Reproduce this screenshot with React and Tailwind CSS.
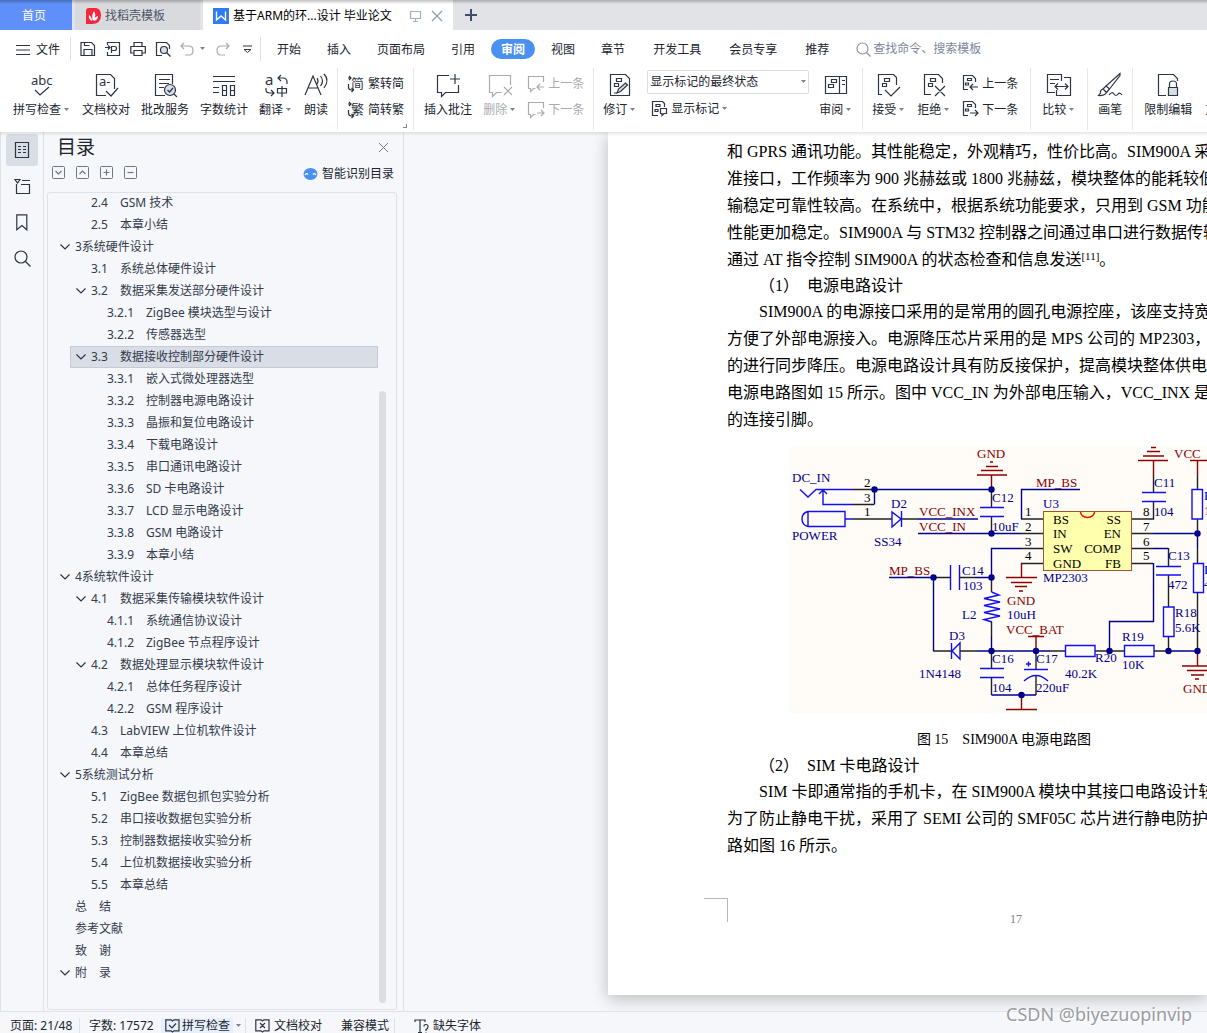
import React from 'react';

const INK = '#2d3443';
const NAVY = '#00008c';
const BLUE = '#1010ee';
const MAROON = '#8c0000';

const menus = ['开始', '插入', '页面布局', '引用', '审阅', '视图', '章节'];
const moreMenus = ['开发工具', '会员专享', '推荐'];

const toc = [
  { level: 2, num: '2.4', title: 'GSM 技术' },
  { level: 2, num: '2.5', title: '本章小结' },
  { level: 1, title: '3系统硬件设计', open: true },
  { level: 2, num: '3.1', title: '系统总体硬件设计' },
  { level: 2, num: '3.2', title: '数据采集发送部分硬件设计', open: true },
  { level: 3, num: '3.2.1', title: 'ZigBee 模块选型与设计' },
  { level: 3, num: '3.2.2', title: '传感器选型' },
  { level: 2, num: '3.3', title: '数据接收控制部分硬件设计', open: true, active: true },
  { level: 3, num: '3.3.1', title: '嵌入式微处理器选型' },
  { level: 3, num: '3.3.2', title: '控制器电源电路设计' },
  { level: 3, num: '3.3.3', title: '晶振和复位电路设计' },
  { level: 3, num: '3.3.4', title: '下载电路设计' },
  { level: 3, num: '3.3.5', title: '串口通讯电路设计' },
  { level: 3, num: '3.3.6', title: 'SD 卡电路设计' },
  { level: 3, num: '3.3.7', title: 'LCD 显示电路设计' },
  { level: 3, num: '3.3.8', title: 'GSM 电路设计' },
  { level: 3, num: '3.3.9', title: '本章小结' },
  { level: 1, title: '4系统软件设计', open: true },
  { level: 2, num: '4.1', title: '数据采集传输模块软件设计', open: true },
  { level: 3, num: '4.1.1', title: '系统通信协议设计' },
  { level: 3, num: '4.1.2', title: 'ZigBee 节点程序设计' },
  { level: 2, num: '4.2', title: '数据处理显示模块软件设计', open: true },
  { level: 3, num: '4.2.1', title: '总体任务程序设计' },
  { level: 3, num: '4.2.2', title: 'GSM 程序设计' },
  { level: 2, num: '4.3', title: 'LabVIEW 上位机软件设计' },
  { level: 2, num: '4.4', title: '本章总结' },
  { level: 1, title: '5系统测试分析', open: true },
  { level: 2, num: '5.1', title: 'ZigBee 数据包抓包实验分析' },
  { level: 2, num: '5.2', title: '串口接收数据包实验分析' },
  { level: 2, num: '5.3', title: '控制器数据接收实验分析' },
  { level: 2, num: '5.4', title: '上位机数据接收实验分析' },
  { level: 2, num: '5.5', title: '本章总结' },
  { level: 1, title: '总\u3000结' },
  { level: 1, title: '参考文献' },
  { level: 1, title: '致\u3000谢' },
  { level: 1, title: '附\u3000录', open: true },
];

const rowIndent = { 1: 'pl-[10px]', 2: 'pl-1', 3: 'pl-5' };
const numWidth = { 2: 'w-[29px]', 3: 'w-[39px]' };

function Icon({ w = 24, h = 24, color = INK, children }) {
  return (
    <svg width={w} height={h} viewBox={`0 0 ${w} ${h}`} fill="none" stroke={color} strokeWidth="1.2" className="shrink-0 overflow-visible">
      {children}
    </svg>
  );
}

function Caret() {
  return (
    <svg width="10" height="6" viewBox="0 0 10 6" className="shrink-0">
      <path d="M3 1h5L5.500 4z" fill="#7b8496" />
    </svg>
  );
}

function Glyph({ x, y, size = 14, fill = INK, children }) {
  return (
    <text x={x} y={y} fontSize={size} fill={fill} stroke="none">
      {children}
    </text>
  );
}

/* ---------- ribbon icons ---------- */

const SpellIcon = () => (
  <Icon w={26}>
    <Glyph x={2} y={12} size={13}>abc</Glyph>
    <path d="M6 17l5 5 9-8" />
  </Icon>
);

const ProofIcon = () => (
  <Icon>
    <path d="M12 22.500H2.500V1.500h14l4 4V16" />
    <Glyph x={5} y={13} size={13}>a-</Glyph>
    <path d="M12 18l5 5 7-8" />
  </Icon>
);

const ReviewServiceIcon = () => (
  <Icon>
    <path d="M12 22.500H2.500V1.500h17V11M6 6.500h11M6 10.500h10M6 14.500h5" />
    <circle cx="17" cy="17" r="5.500" fill="#d7dde6" />
    <path d="M14.500 17l2 2 3.500-4M21 21l3 3" />
  </Icon>
);

const CountIcon = () => (
  <Icon>
    <path d="M1 3.500h22M1 8.500h22M1 14.500h6M1 19.500h6M10.500 12.500h4v10h-4zM18.500 12.500h4v10h-4zM10.500 17.500h4M18.500 17.500h4" />
  </Icon>
);

const TranslateIcon = () => (
  <Icon>
    <Glyph x={1} y={12} size={15}>a</Glyph>
    <path d="M14 5h5q4 0 4 4v2M17 2l-3 3 3 3M2 15v2q0 3 4 3h4M7 17l3 3-3 3M13.500 15.500h9v4.500h-9zM18 13v11" />
  </Icon>
);

const ReadIcon = () => (
  <Icon>
    <path d="M1 22L9 3l8 19M4 15h10M13 5q2 3 0 6M16.500 3q4 5 0 10M20 1q6 6 0 14" />
  </Icon>
);

const HanIcon = ({ char }) => (
  <Icon w={17} h={18}>
    <Glyph x={3} y={14} size={13}>{char}</Glyph>
    <path d="M0 4h3M1 2l2 2-2 2M.5 10v3q0 3 3 3h2M3.500 14l2 2-2 2" />
  </Icon>
);

const InsertNoteIcon = () => (
  <Icon>
    <path d="M13 2.500H1.500v17h4v4l4-4h13V12M19 1v10M14 6h10" />
  </Icon>
);

const DeleteNoteIcon = () => (
  <Icon color="#a9abaf">
    <path d="M22.500 12V2.500H1.500v17h3v4l4-4h5M16 14l8 8M24 14l-8 8" />
  </Icon>
);

const NoteStepIcon = ({ next }) => (
  <Icon w={17} h={17} color="#a9abaf">
    <path d="M15.500 7V1.500h-15v12h2v3l3-3h2" />
    <path d={next ? 'M9 12h7M13 9l3 3-3 3' : 'M16 12H9M12 9l-3 3 3 3'} />
  </Icon>
);

const ReviseIcon = () => (
  <Icon>
    <path d="M21.500 22.500H2.500V1.500h15l4 4zM8.500 5.500h5v3h-5zM6.500 10.500h4v3h-4z" />
    <path d="M9 20l1.500-4 7-6 2 2-7 6.500zM6 20h3" fill="#d7dde6" />
  </Icon>
);

const ShowMarkIcon = () => (
  <Icon w={17} h={17}>
    <path d="M7 15.500H1.500V1.500h10l2 2V7M5 4.500h4v2H5zM4 9.500h3v2H4zM9.500 8.500h6v5H13l-2 2v-2H9.500z" />
  </Icon>
);

const ReviewPaneIcon = () => (
  <Icon>
    <path d="M1.500 3.500h21v17h-21zM15.500 3.500v17M18 7.500h3M18 11.500h3M7.500 6.500h5v3h-5zM4.500 11.500h5v3h-5z" />
  </Icon>
);

const AcceptIcon = () => (
  <Icon>
    <path d="M5 21.500H1.500v-20h15l3 3V12M7.500 5.500h5v3h-5zM5.500 10.500h4v3h-4z" />
    <path d="M8 17l6 6 9-9" />
  </Icon>
);

const RejectIcon = () => (
  <Icon>
    <path d="M9 21.500H2.500v-20h14l4 4V10M8.500 5.500h5v3h-5zM6.500 10.500h4v3h-4zM13 13l10 10M23 13L13 23" />
  </Icon>
);

const ChangeStepIcon = ({ next }) => (
  <Icon w={17} h={18}>
    <path d="M6 15.500H1.500V1.500h9l3 3V8M5.500 4.500h4v2h-4zM3.500 9h3v2H3.500z" />
    <path d={next ? 'M8 13h8M13 10l3 3-3 3' : 'M16 13H8M11 10l-3 3 3 3'} />
  </Icon>
);

const CompareIcon = () => (
  <Icon w={26}>
    <path d="M9 19.500H1.500v-18h14V8M4 6.500h9M4 10.500h5M18 4.500h6.500v18h-14V17M9 13.500h13M12 10.500l-3 3 3 3M19 10.500l3 3-3 3" />
  </Icon>
);

const BrushIcon = () => (
  <Icon>
    <path d="M22 0.500L8 13l3.500 3L22 2.500zM8 13l-3 3 3.500 3.500 3-3.500M5 16q-3 1-2.500 4l-2 2.500q6 .5 8-3M11 22q3-4 5-1 2 3 4 0 2-2 4 1" />
  </Icon>
);

const LockIcon = () => (
  <Icon>
    <path d="M10 22.500H2.500v-21h15l4 4V8" />
    <path d="M13.500 14v-3q0-3 3.500-3t3.500 3v3" />
    <path d="M12.500 14.500h9v8h-9z" fill="#d7dde6" />
  </Icon>
);

/* ---------- ribbon pieces ---------- */

function BigButton({ icon, label, caret, muted }) {
  return (
    <button className={`flex shrink-0 flex-col pt-[5px] whitespace-nowrap ${muted ? 'text-[#a9abaf]' : ''}`}>
      <span className="flex h-6 w-full justify-center">{icon}</span>
      <span className="mt-[5px] flex items-center leading-4">
        {label}
        {caret && <Caret />}
      </span>
    </button>
  );
}

function SmallButton({ icon, label, muted, caret }) {
  return (
    <button className={`flex h-6 items-center gap-[3px] whitespace-nowrap ${muted ? 'text-[#a9abaf]' : ''}`}>
      {icon}
      <span className="flex items-center pt-px">
        {label}
        {caret && <Caret />}
      </span>
    </button>
  );
}

const Pair = ({ children }) => <div className="flex shrink-0 flex-col gap-[2px] pt-[3px]">{children}</div>;
const Rule = () => <div className="-mx-[2px] h-[62px] w-px shrink-0 bg-[#e6e8ec]" />;

function TitleTabs() {
  return (
    <div className="relative flex h-[30px] bg-[#e2e3e6]">
      <button className="w-[72px] bg-[#5f8ff8] pt-[2px] pr-1 text-white">首页</button>
      <button className="ml-[3px] flex w-[125px] items-center gap-1 bg-[#d8dadd] pl-[11px] pt-[2px] text-[#4d5566]">
        <svg width="15" height="16" viewBox="0 0 15 16">
          <path d="M3 0h7q5 1 5 7 0 9-9 9H0V3q0-3 3-3z" fill="#f5273c" />
          <path d="M7 13Q5 8 8 3q3 5-1 10zM6 13Q2 11 3 7q3 2 3 6zM8 13q0-4 4-5 0 4-4 5z" fill="#fff" />
        </svg>
        找稻壳模板
      </button>
      <div className="ml-[3px] flex w-[250px] items-center bg-white pl-[10px] pt-[2px]">
        <svg width="16" height="16" viewBox="0 0 16 16">
          <path d="M0 0h16v16H0z" fill="#2f7bf0" />
          <path d="M3.500 3.500v8.500L8 8l4.500 4V3.500" fill="none" stroke="#fff" strokeWidth="1.400" />
        </svg>
        <button className="ml-1 whitespace-nowrap text-black">基于ARM的环...设计 毕业论文</button>
        <div className="ml-auto flex items-center gap-[9px] pr-[10px]">
          <Icon w={12} h={12} color="#a3afc5">
            <path d="M.5 1.500h10v7H.5zM5.500 8.500v3M3 11.500h5" />
          </Icon>
          <button aria-label="关闭标签">
            <Icon w={12} h={12} color="#8e9ab3">
              <path d="M1 1l10 10M11 1L1 11" />
            </Icon>
          </button>
        </div>
      </div>
      <button aria-label="新建标签" className="ml-3">
        <Icon w={12} h={12} color="#3f4d69">
          <path d="M6 0v12M0 6h12" strokeWidth="2" />
        </Icon>
      </button>
      <div className="pointer-events-none absolute inset-x-0 top-0 h-1 bg-linear-to-b from-black/25 to-transparent" />
    </div>
  );
}

function MenuTab({ label }) {
  const active = label === '审阅';
  return (
    <button
      className={
        active
          ? '-mx-[10px] h-5 rounded-full bg-[#4a90f0] px-[10px] pt-px font-bold text-white'
          : 'h-5 pt-[2px]'
      }
    >
      {label}
    </button>
  );
}

function MenuBar() {
  return (
    <div className="flex h-[38px] items-center whitespace-nowrap pl-4">
      <button className="flex h-5 items-center gap-[6px] pt-px">
        <Icon w={14} h={12}>
          <path d="M0 1.500h14M0 6h14M0 10.500h14" strokeWidth="1" />
        </Icon>
        文件
      </button>
      <div className="ml-[10px] h-6 w-px bg-[#dfe1e6]" />
      <div className="ml-[9px] flex items-center gap-[9px]">
        <button aria-label="保存">
          <Icon w={16} h={16}>
            <path d="M1 1.500h10.500l3 3v10H1zM4 14V8.500h8V14M4.500 1.500v3h5" />
          </Icon>
        </button>
        <button aria-label="输出PDF">
          <Icon w={16} h={16}>
            <path d="M2.500 4V1.500h12v13h-12V11M0 6.500h5M3 4.500l2 2-2 2M6.500 12V5.500h3q2 0 2 2t-2 2h-3" />
          </Icon>
        </button>
        <button aria-label="打印">
          <Icon w={16} h={16}>
            <path d="M4 5V1.500h8V5M4 12H.8V5.500h14.500V12H12M4 9.500h8v5H4z" />
          </Icon>
        </button>
        <button aria-label="打印预览">
          <Icon w={16} h={16}>
            <path d="M7 14.500H1.500v-13h10l3 3V8" />
            <circle cx="9" cy="9" r="3.500" fill="#d7dde6" />
            <path d="M11.500 11.500l4 4" />
          </Icon>
        </button>
        <button className="flex items-center gap-[3px]" aria-label="撤销">
          <Icon w={14} h={14} color="#a9abaf">
            <path d="M1 4h8q4 0 4 4.500T9 13H5M4 1L1 4l3 3" />
          </Icon>
          <Caret />
        </button>
        <button aria-label="恢复">
          <Icon w={14} h={14} color="#a9abaf">
            <path d="M13 4H5q-4 0-4 4.500T5 13h4M10 1l3 3-3 3" />
          </Icon>
        </button>
        <button className="ml-1" aria-label="自定义">
          <Icon w={9} h={9}>
            <path d="M0 1h9M1 4.500h7L4.500 7.500z" strokeWidth="1" />
          </Icon>
        </button>
      </div>
      <div className="ml-[8px] h-6 w-px bg-[#dfe1e6]" />
      <nav className="ml-4 flex items-center gap-[26px]">
        {menus.map((m) => <MenuTab key={m} label={m} />)}
      </nav>
      <nav className="ml-[28px] flex items-center gap-[28px]">
        {moreMenus.map((m) => <MenuTab key={m} label={m} />)}
      </nav>
      <label className="ml-[27px] flex items-center gap-[2px]">
        <Icon w={15} h={15} color="#8a95ab">
          <circle cx="6.500" cy="6.500" r="5.500" />
          <path d="M10.500 10.500l4 4" />
        </Icon>
        <input aria-label="查找命令" placeholder="查找命令、搜索模板" className="w-[120px] outline-none placeholder:text-[#7d879b]" />
      </label>
    </div>
  );
}

function Ribbon() {
  return (
    <div className="relative z-10 flex h-16 items-start gap-[11px] overflow-hidden bg-white pl-[13px]">
      <BigButton icon={<SpellIcon />} label="拼写检查" caret />
      <BigButton icon={<ProofIcon />} label="文档校对" />
      <BigButton icon={<ReviewServiceIcon />} label="批改服务" />
      <BigButton icon={<CountIcon />} label="字数统计" />
      <BigButton icon={<TranslateIcon />} label="翻译" caret />
      <BigButton icon={<ReadIcon />} label="朗读" />
      <Rule />
      <div className="relative pl-px">
        <Pair>
          <SmallButton icon={<HanIcon char="简" />} label="繁转简" />
          <SmallButton icon={<HanIcon char="繁" />} label="简转繁" />
        </Pair>
        <span className="absolute -bottom-[7px] -right-[3px] size-1 border-b border-r border-[#7b8496]" />
      </div>
      <Rule />
      <div className="pl-px">
        <BigButton icon={<InsertNoteIcon />} label="插入批注" />
      </div>
      <BigButton icon={<DeleteNoteIcon />} label="删除" caret muted />
      <Pair>
        <SmallButton icon={<NoteStepIcon />} label="上一条" muted />
        <SmallButton icon={<NoteStepIcon next />} label="下一条" muted />
      </Pair>
      <Rule />
      <BigButton icon={<ReviseIcon />} label="修订" caret />
      <div className="-ml-px flex w-[162px] shrink-0 flex-col gap-[2px] pt-[2px]">
        <div className="relative flex items-center">
          <select aria-label="标记显示方式" className="h-6 w-full appearance-none rounded-[2px] border border-[#d9dce2] bg-white pl-[2px] outline-none">
            <option>显示标记的最终状态</option>
          </select>
          <span className="pointer-events-none absolute right-[1px]"><Caret /></span>
        </div>
        <div className="pl-1">
          <SmallButton icon={<ShowMarkIcon />} label="显示标记" caret />
        </div>
      </div>
      <div className="-ml-px">
        <BigButton icon={<ReviewPaneIcon />} label="审阅" caret />
      </div>
      <Rule />
      <BigButton icon={<AcceptIcon />} label="接受" caret />
      <BigButton icon={<RejectIcon />} label="拒绝" caret />
      <div className="pr-[3px]">
        <Pair>
          <SmallButton icon={<ChangeStepIcon />} label="上一条" />
          <SmallButton icon={<ChangeStepIcon next />} label="下一条" />
        </Pair>
      </div>
      <Rule />
      <div className="px-[2px]">
        <BigButton icon={<CompareIcon />} label="比较" caret />
      </div>
      <Rule />
      <div className="px-px">
        <BigButton icon={<BrushIcon />} label="画笔" />
      </div>
      <Rule />
      <div className="px-[2px]">
        <BigButton icon={<LockIcon />} label="限制编辑" />
      </div>
      <BigButton label="文" />
    </div>
  );
}

/* ---------- left side ---------- */

function SideRail() {
  return (
    <div className="flex w-11 shrink-0 flex-col gap-1 border-x border-[#dfe2e8] pl-[5px] pt-[2px]">
      <button aria-label="目录" className="flex size-8 items-center justify-center rounded-[3px] bg-[#d8dde6]">
        <Icon w={16} h={16}>
          <path d="M1.500.5h13v15h-13zM4 4.500h3M9 4.500h3M4 7.500h3M9 7.500h3M4 10.500h3M9 10.500h3" />
        </Icon>
      </button>
      <button aria-label="章节" className="flex size-8 items-center justify-center">
        <Icon w={17} h={17}>
          <path d="M1 1.500h5L3.500 5zM8 2.500h8M2.500 6v9.500h13v-9H7" />
        </Icon>
      </button>
      <button aria-label="书签" className="flex size-8 items-center justify-center">
        <Icon w={12} h={17}>
          <path d="M.8.8h10v15L6 11.500 .8 15.800z" />
        </Icon>
      </button>
      <button aria-label="查找" className="flex size-8 items-center justify-center">
        <Icon w={17} h={17}>
          <circle cx="7" cy="7" r="6" />
          <path d="M11.500 11.500l5 5" />
        </Icon>
      </button>
    </div>
  );
}

function BoxButton({ label, d }) {
  return (
    <button aria-label={label}>
      <Icon w={13} h={13} color="#6f7685">
        <rect x=".5" y=".5" width="12" height="12" rx="1" strokeWidth="1" />
        <path d={d} />
      </Icon>
    </button>
  );
}

function TocRow({ item }) {
  return (
    <li className={`mr-[18px] ${item.level === 1 ? '' : 'ml-[22px]'}`}>
      <a
        href="#toc"
        className={`flex h-[22px] items-center whitespace-nowrap border ${
          item.active ? 'border-[#c5cbd6] bg-[#d8dde6]' : 'border-transparent'
        } ${rowIndent[item.level]}`}
      >
        <span className="w-4 shrink-0">
          {item.open && (
            <Icon w={12} h={8}>
              <path d="M1.500 1.500L6 6l4.500-4.500" />
            </Icon>
          )}
        </span>
        {item.num && <span className={`shrink-0 ${numWidth[item.level]}`}>{item.num}</span>}
        {item.title}
      </a>
    </li>
  );
}

function TocPanel() {
  return (
    <aside className="flex w-[360px] shrink-0 flex-col border-r border-[#dfe2e8] pb-px pl-[3px] pr-[6px]">
      <div className="flex h-[30px] items-center justify-between pl-[10px] pr-[8px]">
        <h2 className="pt-[2px] text-[19px]">目录</h2>
        <button aria-label="关闭目录">
          <Icon w={11} h={11} color="#6f7685">
            <path d="M1 1l9 9M10 1L1 10" strokeWidth="1" />
          </Icon>
        </button>
      </div>
      <div className="flex h-[30px] items-start gap-[11px] pl-[5px] pr-[3px] pt-1">
        <BoxButton label="展开" d="M3.500 5l3 3 3-3" />
        <BoxButton label="收起" d="M3.500 8l3-3 3 3" />
        <BoxButton label="放大级别" d="M6.500 3.500v6M3.500 6.500h6" />
        <BoxButton label="缩小级别" d="M3.500 6.500h6" />
        <button className="ml-auto flex items-center gap-1">
          <svg width="15" height="14" viewBox="0 0 15 14">
            <ellipse cx="7.500" cy="7" rx="7" ry="6" fill="#4a90f0" />
            <path d="M2 8q1.500-2.500 3-.5M10 7.500q1.500-2 3 .5" fill="none" stroke="#fff" strokeWidth="1.300" />
          </svg>
          智能识别目录
        </button>
      </div>
      <div className="relative min-h-0 flex-1 overflow-hidden rounded-[3px] border border-[#dfe2e8]">
        <ul className="-mt-px text-[#333b4c]">
          {toc.map((item, i) => <TocRow key={i} item={item} />)}
        </ul>
        <div className="absolute bottom-[6px] right-[10px] top-[198px] w-[7px] rounded-full bg-[#dadde2]" />
      </div>
    </aside>
  );
}

/* ---------- circuit drawing ---------- */

const wires = [
  [BLUE, 'M800 489.500L808 497L816 489.500H852M823 490V504.500H852M819 494L823 490L827 494'],
  ['#222', 'M852 489.500H874M852 504.500H874M852 519H892M902 519H918'],
  [NAVY, 'M874 489.500H991.500M874.500 489.500V504.500M918 519H978M918 533.500H1021'],
  [BLUE, 'M845 519H852M808 511.500H845V526.500H808ZM808 511.500Q802 513 802 519Q802 525 808 526.500'],
  [BLUE, 'M892 512V527L901 519ZM901.500 511V527'],
  [MAROON, 'M990 462H993M986 466.500H998M981 470.500H1003M977 475H1007M991.500 475V489.500'],
  ['#222', 'M991.500 489.500V507M991.500 516V533.500M1021 519H1043M1021 533.500H1043M1021 548.500H1043M1021 563.500H1043'],
  [BLUE, 'M980 507.500H1004M980 516.500H1004'],
  [NAVY, 'M1080 489.500H1021.500V519M1021 548.500H991.500V577.500'],
  [MAROON, 'M1021.500 563V577.500M1006 577.500H1037M1011 582.500H1032M1015 586.500H1027M1019 591H1023'],
  ['#222', 'M1131 519H1153.500V501M1153.500 492V475M1131 533.500H1153M1131 548.500H1153M1131 563.500H1153'],
  [BLUE, 'M1142 492.500H1166M1142 501.500H1166'],
  [MAROON, 'M1153.500 475V460.500M1138 460.500H1168M1143 456H1164M1147 451.500H1160M1151 447.500H1156'],
  [NAVY, 'M1153 533.500H1197.500V548M1153 548.500H1168.500M1153.500 563V621.500H1109.500V651'],
  [MAROON, 'M1190 460.500H1207M1197.500 460V475'],
  ['#222', 'M1197.500 475V489M1197.500 519V533M1197.500 548V563M1197.500 592V651'],
  [BLUE, 'M1192 489.500H1202.500V519H1192ZM1193.500 563.500H1203.500V592.500H1193.500Z'],
  ['#222', 'M1168.500 548V566M1168.500 575V607M1168.500 636V651'],
  [BLUE, 'M1156 566.500H1181M1156 575H1181M1163.500 607H1174V636.500H1163.500Z'],
  [NAVY, 'M889 577.500H933.500V651M975 577.500H991.500M977 651H1050M1168 651H1197M991.500 636V651'],
  ['#222', 'M933 577.500H950M960 577.500H975M933 651H951M960 651H977M991.500 577V592M991.500 622V636'],
  [BLUE, 'M950.500 565V590M959.500 565V590M951.500 643V659M960 643V659L952 651Z'],
  [BLUE, 'M991.500 592L999 595L984 598.500L1000 602L984 605.500L1000 609L984 612.500L1000 616L984 619.500L992 622'],
  [MAROON, 'M1028 636.500H1044M1036 636V651'],
  ['#222', 'M1050 651H1065M1095 651H1124M1154 651H1168M991.500 651V668M991.500 677V695M1036 651V669M1036 676V695'],
  [BLUE, 'M1065.500 645.500H1095V656.500H1065.500ZM1124.500 645.500H1154V656.500H1124.500Z'],
  [BLUE, 'M980 668.500H1004M980 677.500H1004M1024 669.500H1048M1024 681Q1036 670 1048 681M1026 664H1031M1028.500 661.500V666.500'],
  [NAVY, 'M991.500 695H1036'],
  [MAROON, 'M1021.500 695V709.500M1006 709.500H1037M1197.500 651V666M1182 666H1210M1187 670.500H1208M1191 675H1204M1195 679H1199'],
];

const joints = [
  [874.5, 489.5], [991.5, 489.5], [991.5, 533.5], [1197.5, 533.5], [933.5, 577.5], [991.5, 577.5],
  [991.5, 651], [1036, 651], [1109.5, 651], [1168.5, 651], [1197.5, 651], [1021.5, 695],
];

const partLabels = [
  [792, 482, 'DC_IN'], [792, 540, 'POWER'], [891, 508, 'D2'], [874, 546, 'SS34'], [992, 502, 'C12'],
  [992, 531, '10uF'], [1043, 508, 'U3'], [1043, 582, 'MP2303'], [1154, 487, 'C11'], [1154, 516, '104'],
  [1168, 560, 'C13'], [1168, 589, '472'], [1175, 617, 'R18'], [1175, 632, '5.6K'], [962, 575, 'C14'],
  [963, 590, '103'], [949, 640, 'D3'], [919, 678, '1N4148'], [962, 619, 'L2'], [1007, 619, '10uH'],
  [992, 663, 'C16'], [992, 692, '104'], [1036, 663, 'C17'], [1036, 692, '220uF'], [1095, 662, 'R20'],
  [1065, 678, '40.2K'], [1122, 641, 'R19'], [1122, 669, '10K'], [1204, 500, 'R'], [1204, 515, '1'],
  [1204, 574, 'R'], [1204, 588, '4'],
];

const netLabels = [
  [919, 516, 'VCC_INX'], [919, 531, 'VCC_IN'], [977, 458, 'GND'], [1036, 487, 'MP_BS'], [1174, 458, 'VCC'],
  [889, 575, 'MP_BS'], [1007, 605, 'GND'], [1006, 634, 'VCC_BAT'], [1183, 693, 'GND'],
];

const pinLabels = [
  [864, 487, '2'], [864, 502, '3'], [864, 516, '1'], [1025, 516, '1'], [1025, 531, '2'], [1025, 546, '3'],
  [1025, 560, '4'], [1143, 516, '8'], [1143, 531, '7'], [1143, 546, '6'], [1143, 560, '5'],
  [1053, 524, 'BS'], [1053, 538, 'IN'], [1053, 553, 'SW'], [1053, 568, 'GND'],
];

const rightPins = [[524, 'SS'], [538, 'EN'], [553, 'COMP'], [568, 'FB']];

function Circuit() {
  return (
    <svg width="417" height="267" viewBox="790 446 417 267" className="bg-[#fffcf7] font-['Liberation_Serif',serif] text-[13px]">
      {wires.map(([color, d], i) => (
        <path key={i} d={d} fill="none" stroke={color} strokeWidth="1.400" />
      ))}
      <rect x="1043.500" y="511.500" width="88" height="59" fill="#ffffae" stroke="#a0522d" />
      <path d="M1080.500 512a7 5.500 0 0 0 14 0" fill="none" stroke="#e81010" strokeWidth="1.500" />
      {joints.map(([x, y]) => <circle key={`${x}-${y}`} cx={x} cy={y} r="3.200" fill={NAVY} />)}
      {partLabels.map(([x, y, t]) => <text key={`${x}-${y}`} x={x} y={y} fill="#00008c">{t}</text>)}
      {netLabels.map(([x, y, t]) => <text key={`${x}-${y}`} x={x} y={y} fill="#8c0000">{t}</text>)}
      {pinLabels.map(([x, y, t]) => <text key={`${x}-${y}`} x={x} y={y}>{t}</text>)}
      {rightPins.map(([y, t]) => <text key={t} x="1121" y={y} textAnchor="end">{t}</text>)}
    </svg>
  );
}

/* ---------- document ---------- */

function DocumentPage() {
  return (
    <main className="min-w-0 flex-1 overflow-hidden">
      <article className="ml-[204px] h-[863px] overflow-hidden bg-white pl-[119px] pt-[6px] font-['Liberation_Serif','Noto_Sans_CJK_SC',serif] text-base leading-[27px] text-black shadow-[0_4px_16px_rgba(0,0,0,0.24)]">
        <div className="w-[554px] whitespace-nowrap">
          <p>
            和 GPRS 通讯功能。其性能稳定，外观精巧，性价比高。SIM900A 采<br />
            准接口，工作频率为 900 兆赫兹或 1800 兆赫兹，模块整体的能耗较低<br />
            输稳定可靠性较高。在系统中，根据系统功能要求，只用到 GSM 功能<br />
            性能更加稳定。SIM900A 与 STM32 控制器之间通过串口进行数据传输<br />
            通过 AT 指令控制 SIM900A 的状态检查和信息发送<sup className="text-[11px] leading-none">[11]</sup>。
          </p>
          <h3 className="whitespace-pre pl-8 leading-[25px]">（1）  电源电路设计</h3>
          <p>
            <span className="pl-8">SIM900A 的电源接口采用的是常用的圆孔电源控座，该座支持宽</span><br />
            方便了外部电源接入。电源降压芯片采用的是 MPS 公司的 MP2303，<br />
            的进行同步降压。电源电路设计具有防反接保护，提高模块整体供电<br />
            电源电路图如 15 所示。图中 VCC_IN 为外部电压输入，VCC_INX 是<br />
            的连接引脚。
          </p>
          <figure>
            <div className="pl-[63px] pt-[13px]">
              <Circuit />
            </div>
            <figcaption className="pt-[13px] text-center text-sm leading-[27px]">图 15　SIM900A 电源电路图</figcaption>
          </figure>
          <h3 className="whitespace-pre pl-8 leading-[25px]">（2）  SIM 卡电路设计</h3>
          <p>
            <span className="pl-8">SIM 卡即通常指的手机卡，在 SIM900A 模块中其接口电路设计较</span><br />
            为了防止静电干扰，采用了 SEMI 公司的 SMF05C 芯片进行静电防护。<br />
            路如图 16 所示。
          </p>
        </div>
        <footer className="-ml-[23px] mt-[39px] flex">
          <span className="h-6 w-6 border-r border-t border-[#b8b8b8]" />
          <span className="ml-[282px] pt-[13px] text-xs leading-4 text-[#808080]">17</span>
        </footer>
      </article>
    </main>
  );
}

function StatusBar() {
  return (
    <footer className="relative flex h-[22px] shrink-0 items-center whitespace-nowrap border-t border-[#dfe2e8] bg-[#f5f7fa] pl-[10px] pt-[7px]">
      <span className="w-[69px] shrink-0">页面: 21/48</span>
      <span className="h-4 w-px bg-[#dfe2e8]" />
      <span className="w-[81px] shrink-0 pl-[9px]">字数: 17572</span>
      <button className="flex items-center gap-[2px] bg-[#e6effb] pl-1 pr-[3px]">
        <Icon w={15} h={14}>
          <path d="M7.500 2L6 .8H.8v11H6L7.500 13 9 11.800h5V.8H9zM4 6l3 3 4-4.500" />
        </Icon>
        拼写检查
      </button>
      <button aria-label="拼写选项"><Caret /></button>
      <span className="ml-[2px] h-4 w-px bg-[#dfe2e8]" />
      <button className="ml-[9px] flex items-center gap-1">
        <Icon w={15} h={14}>
          <path d="M7.500 2L6 .8H.8v11H6L7.500 13 9 11.800h5V.8H9zM5 4l5 5M10 4L5 9" />
        </Icon>
        文档校对
      </button>
      <button className="ml-[19px]">兼容模式</button>
      <span className="ml-[5px] h-4 w-px bg-[#dfe2e8]" />
      <button className="ml-[19px] flex items-center gap-1">
        <Icon w={15} h={15}>
          <path d="M1 3V1h10v2M6 1v12M4 13.500h4M10 7.500q0-2 2-2t2 2-2 3v1.500M12 13.500v1" />
        </Icon>
        缺失字体
      </button>
    </footer>
  );
}

export default function App() {
  return (
    <div className="relative flex h-screen flex-col overflow-hidden bg-white font-['Noto_Sans','Noto_Sans_CJK_SC',sans-serif] text-xs text-[#20242e]">
      <TitleTabs />
      <MenuBar />
      <Ribbon />
      <div className="relative flex min-h-0 flex-1 bg-[#f5f7fa]">
        <div className="pointer-events-none absolute inset-x-0 top-0 z-10 h-1 bg-linear-to-b from-black/10 to-transparent" />
        <SideRail />
        <TocPanel />
        <DocumentPage />
      </div>
      <StatusBar />
      <div className="pointer-events-none absolute bottom-[7px] right-[15px] font-['Noto_Sans',sans-serif] text-lg leading-6 text-[#9a9ca0] [text-shadow:1px_1px_0_#fff]">
        CSDN @biyezuopinvip
      </div>
    </div>
  );
}
